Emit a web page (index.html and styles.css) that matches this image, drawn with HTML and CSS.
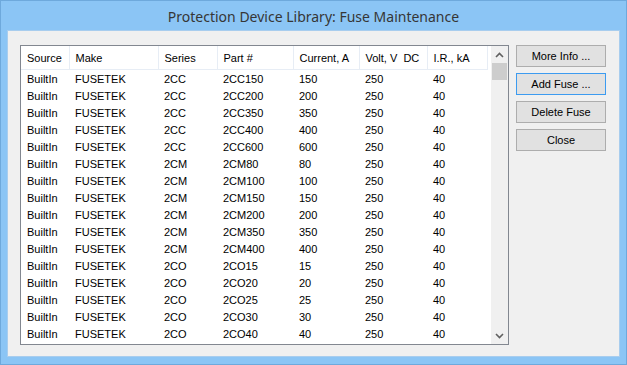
FILE: index.html
```html
<!DOCTYPE html>
<html>
<head>
<meta charset="utf-8">
<title>Protection Device Library: Fuse Maintenance</title>
<link rel="stylesheet" href="styles.css">
</head>
<body>
<div class="window">
  <div class="titlebar">Protection Device Library: Fuse Maintenance</div>
  <div class="client">
    <div class="listview">
      <div class="listarea">
        <table class="grid">
          <colgroup>
            <col style="width:48px"><col style="width:89px"><col style="width:59px"><col style="width:76px">
            <col style="width:66px"><col style="width:68px"><col style="width:60px">
          </colgroup>
          <thead>
            <tr><th>Source</th><th>Make</th><th>Series</th><th>Part #</th><th>Current, A</th><th>Volt, V&nbsp; DC</th><th>I.R., kA</th></tr>
          </thead>
          <tbody>
            <tr><td>BuiltIn</td><td>FUSETEK</td><td>2CC</td><td>2CC150</td><td>150</td><td>250</td><td>40</td></tr>
            <tr><td>BuiltIn</td><td>FUSETEK</td><td>2CC</td><td>2CC200</td><td>200</td><td>250</td><td>40</td></tr>
            <tr><td>BuiltIn</td><td>FUSETEK</td><td>2CC</td><td>2CC350</td><td>350</td><td>250</td><td>40</td></tr>
            <tr><td>BuiltIn</td><td>FUSETEK</td><td>2CC</td><td>2CC400</td><td>400</td><td>250</td><td>40</td></tr>
            <tr><td>BuiltIn</td><td>FUSETEK</td><td>2CC</td><td>2CC600</td><td>600</td><td>250</td><td>40</td></tr>
            <tr><td>BuiltIn</td><td>FUSETEK</td><td>2CM</td><td>2CM80</td><td>80</td><td>250</td><td>40</td></tr>
            <tr><td>BuiltIn</td><td>FUSETEK</td><td>2CM</td><td>2CM100</td><td>100</td><td>250</td><td>40</td></tr>
            <tr><td>BuiltIn</td><td>FUSETEK</td><td>2CM</td><td>2CM150</td><td>150</td><td>250</td><td>40</td></tr>
            <tr><td>BuiltIn</td><td>FUSETEK</td><td>2CM</td><td>2CM200</td><td>200</td><td>250</td><td>40</td></tr>
            <tr><td>BuiltIn</td><td>FUSETEK</td><td>2CM</td><td>2CM350</td><td>350</td><td>250</td><td>40</td></tr>
            <tr><td>BuiltIn</td><td>FUSETEK</td><td>2CM</td><td>2CM400</td><td>400</td><td>250</td><td>40</td></tr>
            <tr><td>BuiltIn</td><td>FUSETEK</td><td>2CO</td><td>2CO15</td><td>15</td><td>250</td><td>40</td></tr>
            <tr><td>BuiltIn</td><td>FUSETEK</td><td>2CO</td><td>2CO20</td><td>20</td><td>250</td><td>40</td></tr>
            <tr><td>BuiltIn</td><td>FUSETEK</td><td>2CO</td><td>2CO25</td><td>25</td><td>250</td><td>40</td></tr>
            <tr><td>BuiltIn</td><td>FUSETEK</td><td>2CO</td><td>2CO30</td><td>30</td><td>250</td><td>40</td></tr>
            <tr><td>BuiltIn</td><td>FUSETEK</td><td>2CO</td><td>2CO40</td><td>40</td><td>250</td><td>40</td></tr>
          </tbody>
        </table>
      </div>
      <div class="scrollbar">
        <div class="sb-btn">
          <svg width="9" height="6" viewBox="0 0 9 6"><polyline points="1,5 4.5,1.5 8,5" fill="none" stroke="#606060" stroke-width="1.6"/></svg>
        </div>
        <div class="sb-thumb"></div>
        <div class="sb-track"></div>
        <div class="sb-btn">
          <svg width="9" height="6" viewBox="0 0 9 6"><polyline points="1,1 4.5,4.5 8,1" fill="none" stroke="#606060" stroke-width="1.6"/></svg>
        </div>
      </div>
    </div>
    <div class="buttons">
      <button class="btn">More Info ...</button>
      <button class="btn btn-focus">Add Fuse ...</button>
      <button class="btn">Delete Fuse</button>
      <button class="btn">Close</button>
    </div>
  </div>
</div>
</body>
</html>
```
FILE: styles.css
```css
body {
  margin: 0;
  font-family: "Liberation Sans", Arial, sans-serif;
  font-size: 11px;
}
.window {
  width: 627px;
  height: 365px;
  box-sizing: border-box;
  border: 1px solid #6ea9dc;
  background: #8bc5f5;
  display: flex;
  flex-direction: column;
}
.titlebar {
  height: 29px;
  line-height: 31px;
  text-align: center;
  font-family: "Noto Sans", sans-serif;
  font-size: 14px;
  color: #363636;
  white-space: nowrap;
}
.client {
  flex: 1;
  margin: 0 6px 7px 6px;
  border: 1px solid #a8cdee;
  background: #f0f0f0;
  display: flex;
  align-items: flex-start;
  padding: 14px 0 0 12px;
}
.listview {
  width: 489px;
  height: 300px;
  box-sizing: border-box;
  border: 1px solid #828790;
  background: #fff;
  display: flex;
}
.listarea {
  flex: 1;
  overflow: hidden;
}
.grid {
  border-collapse: collapse;
  table-layout: fixed;
  width: 466px;
  color: #000;
}
.grid th {
  height: 23px;
  padding: 0 0 0 6px;
  font-weight: normal;
  text-align: left;
  white-space: nowrap;
  border-right: 1px solid #e7edf5;
  border-bottom: 1px solid #e7edf5;
}
.grid td {
  height: 17px;
  padding: 0 0 0 6px;
  white-space: nowrap;
}
.scrollbar {
  width: 17px;
  background: #f0f0f0;
  display: flex;
  flex-direction: column;
}
.sb-btn {
  height: 17px;
  display: flex;
  align-items: center;
  justify-content: center;
}
.sb-thumb {
  height: 17px;
  margin: 0 1px;
  background: #cdcdcd;
}
.sb-track {
  flex: 1;
}
.buttons {
  margin-left: 7px;
  display: flex;
  flex-direction: column;
  gap: 6px;
}
.btn {
  width: 90px;
  height: 22px;
  margin: 0;
  padding: 0;
  box-sizing: border-box;
  border: 1px solid #adadad;
  background: #e1e1e1;
  font-family: "Liberation Sans", Arial, sans-serif;
  font-size: 11px;
  color: #000;
}
.btn-focus {
  border-color: #3c9bf0;
}
```
